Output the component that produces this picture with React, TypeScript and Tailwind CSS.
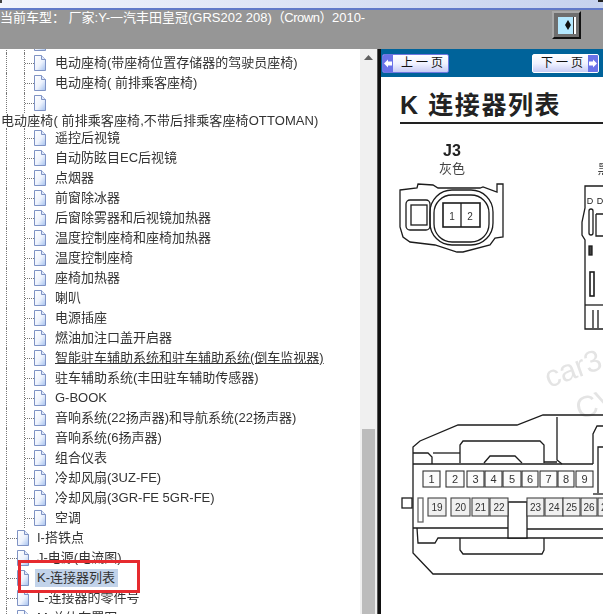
import React from "react";

const nestedItems = [
  "遥控后视镜",
  "自动防眩目EC后视镜",
  "点烟器",
  "前窗除冰器",
  "后窗除雾器和后视镜加热器",
  "温度控制座椅和座椅加热器",
  "温度控制座椅",
  "座椅加热器",
  "喇叭",
  "电源插座",
  "燃油加注口盖开启器",
  "智能驻车辅助系统和驻车辅助系统(倒车监视器)",
  "驻车辅助系统(丰田驻车辅助传感器)",
  "G-BOOK",
  "音响系统(22扬声器)和导航系统(22扬声器)",
  "音响系统(6扬声器)",
  "组合仪表",
  "冷却风扇(3UZ-FE)",
  "冷却风扇(3GR-FE 5GR-FE)",
  "空调",
];

const topItems = ["I-搭铁点", "J-电源(电流图)", "K-连接器列表", "L-连接器的零件号", "M-总体布置图"];

const row1 = [
  [423, 440],
  [446, 464],
  [467, 484],
  [485, 502],
  [503, 521],
  [522, 538],
  [540, 557],
  [558, 574],
  [576, 593],
];

const row2: [number, number, number][] = [
  [428, 446, 19],
  [451, 470, 20],
  [472, 489, 21],
  [490, 508, 22],
  [527, 544, 23],
  [545, 563, 24],
  [563, 580, 25],
  [581, 597, 26],
  [598, 615, 27],
];

const PageIcon = () => (
  <svg width="12" height="16" viewBox="0 0 12 16" className="shrink-0">
    <defs>
      <linearGradient id="pageFill" x1="0" y1="0" x2="1" y2="1">
        <stop offset="0" stopColor="#ffffff" />
        <stop offset="0.55" stopColor="#eef3fd" />
        <stop offset="1" stopColor="#a3c0ee" />
      </linearGradient>
    </defs>
    <path d="M0.5 0.5H7.5L11.5 4.5V15.5H0.5Z" fill="url(#pageFill)" stroke="#7f93c4" />
    <path d="M7.5 0.5V4.5H11.5" fill="#dfe8fa" stroke="#7f93c4" />
  </svg>
);

const NestedRow = ({ label, underline }: { label: string; underline?: boolean }) => (
  <div className="flex h-5 items-center">
    <span className="ml-[6px] h-full border-l border-dotted border-[#777]" />
    <span className="ml-[17px] h-full border-l border-dotted border-[#777]" />
    <span className="w-[9px] border-t border-dotted border-[#777]" />
    <PageIcon />
    <span className={"ml-[9px] whitespace-nowrap" + (underline ? " underline" : "")}>{label}</span>
  </div>
);

const TopRow = ({ label, selected }: { label: string; selected?: boolean }) => (
  <div className="flex h-5 items-center">
    <span className="ml-[6px] h-full border-l border-dotted border-[#777]" />
    <span className="w-[10px] border-t border-dotted border-[#777]" />
    <PageIcon />
    <span className={"ml-[6px] whitespace-nowrap pl-[2px] pr-[3px] leading-[18px]" + (selected ? " bg-[#c2d3ea]" : "")}>{label}</span>
  </div>
);

const NavButton = ({ label, dir }: { label: string; dir: "left" | "right" }) => (
  <div
    className={
      "flex h-[19px] w-[67px] items-stretch overflow-hidden rounded-[2px] border bg-gradient-to-b from-[#ffffff] via-[#f0f2ff] to-[#c8ccf4] " +
      (dir === "left" ? "border-[#6f78e0]" : "border-[#ffffff]")
    }
  >
    {dir === "left" && (
      <span className="flex w-[10px] items-center justify-center bg-[#6a72e8]">
        <svg width="8" height="9" viewBox="0 0 8 9">
          <path d="M0 4.5L4 0.5V2.5H8V6.5H4V8.5Z" fill="#ffffff" />
        </svg>
      </span>
    )}
    <span className="flex-1 whitespace-nowrap pl-[6px] text-center text-[12px] leading-[17px] tracking-[3px] text-[#111]">{label}</span>
    {dir === "right" && (
      <span className="flex w-[10px] items-center justify-center bg-[#6a72e8]">
        <svg width="8" height="9" viewBox="0 0 8 9">
          <path d="M8 4.5L4 0.5V2.5H0V6.5H4V8.5Z" fill="#ffffff" />
        </svg>
      </span>
    )}
  </div>
);

const ConnectorSheet = () => (
  <svg width="222" height="490" viewBox="381 124 222 490" className="block blur-[0.3px]">
    <g fontFamily='"Liberation Sans", Arial, sans-serif' fill="#222" textAnchor="middle">
      <text x="452" y="156" fontSize="16" fontWeight="700">J3</text>
      <text x="452" y="173" fontSize="13" fontFamily='"Noto Sans CJK SC", sans-serif' fill="#444">灰色</text>
      <text x="604" y="173" fontSize="13" fontFamily='"Noto Sans CJK SC", sans-serif' fill="#444">黑</text>
    </g>

    {/* J3 connector */}
    <g fill="none" stroke="#1c1c1c" strokeWidth="1.3">
      <path d="M400 190L417 188L418 184L433 185L438 188H480L483 187L497 192V184H503V237L495 238L490 245L463 252H457L435 245L410 242L403 237L400 227Z" />
      <rect x="430" y="190" width="63" height="55" rx="22" />
      <rect x="434" y="195" width="55" height="47" rx="18" />
      <rect x="443" y="203" width="37" height="24" strokeWidth="1.6" />
      <path d="M461 203V227" />
      <rect x="406" y="200" width="24" height="30" rx="4" />
      <rect x="411" y="205" width="16" height="20" />
      <text x="452" y="220" fontSize="10" fontFamily='"Liberation Sans", sans-serif' fill="#333" stroke="none" textAnchor="middle">1</text>
      <text x="470" y="220" fontSize="10" fontFamily='"Liberation Sans", sans-serif' fill="#333" stroke="none" textAnchor="middle">2</text>
    </g>

    {/* right connector, cut off by the page edge */}
    <g fill="none" stroke="#1c1c1c" strokeWidth="1.3">
      <path d="M604 186H585V208L582 222V235L585 240V329H604" />
      <path d="M585 305H604" />
      <path d="M596 214H604M596 214V236H604" />
      <rect x="589" y="209" width="4" height="26" rx="2" />
      <rect x="590" y="272" width="4" height="24" strokeWidth="1.6" />
      <rect x="589" y="246" width="3" height="9" fill="#444" />
      <path d="M593 310V328M598 310V328" />
      <text x="590" y="204" fontSize="9" fontFamily='"Liberation Sans", sans-serif' fill="#222" stroke="none" textAnchor="middle">D</text>
      <text x="600" y="204" fontSize="9" fontFamily='"Liberation Sans", sans-serif' fill="#222" stroke="none" textAnchor="middle">D</text>
    </g>

    {/* watermark */}
    <g fontFamily='"Liberation Sans", sans-serif' fontSize="30" fill="#e4e4e4">
      <text x="549" y="388" transform="rotate(-20 549 388)">car3</text>
      <text x="580" y="420" transform="rotate(-20 580 420)">CV</text>
    </g>

    {/* main connector */}
    <g fill="none" stroke="#1c1c1c" strokeWidth="1.3">
      <path d="M604 415H543L517 425H458L420 441L413 447V553L433 574H604" />
      <path d="M413 464H593" />
      <path d="M460 463V445L463 441H540L544 445V463" />
      <path d="M484 463L490 456H515L522 463" />
      <path d="M413 453H428L432 457V464" />
      <path d="M433 453H460" />
      <path d="M544 462H557M557 417V460L562 464" />
      <path d="M593 464V434L597 426H604" />
      <path d="M598 493V447H604" />
      <path d="M593 494H604" />
      <path d="M413 528H508M527 529H604" />
      <path d="M417 528L418 543H435L438 538H604" />
      <path d="M460 538V550L463 554H542L544 550V538" />
      <path d="M508 502H527V538H508Z" fill="#ffffff" />
      <rect x="402" y="498" width="10" height="10" />
      <rect x="418" y="498" width="5" height="24" stroke="#666" />
    </g>
    <g fontFamily='"Liberation Sans", sans-serif' fontSize="11" fill="#333" textAnchor="middle">
      {row1.map(([a, b], i) => (
        <g key={a}>
          <rect x={a} y="471" width={b - a} height="16" fill="#fbfbfb" stroke="#333" strokeWidth="1.1" />
          <text x={(a + b) / 2} y="483">{i + 1}</text>
        </g>
      ))}
      {row2.map(([a, b, n]) => (
        <g key={n}>
          <rect x={a} y="498" width={b - a} height="18" fill="#f0f0f0" stroke="#444" strokeWidth="1.1" />
          <text x={(a + b) / 2} y="511" fontSize="10">{n}</text>
        </g>
      ))}
    </g>
  </svg>
);

export default function App() {
  return (
    <div className="relative flex h-[614px] w-[603px] flex-col overflow-hidden bg-white font-['Liberation_Sans','Noto_Sans_CJK_SC',sans-serif] text-[13px] text-[#333]">
      {/* window title strip */}
      <div className="flex h-[8px] justify-between bg-gradient-to-r from-[#f2f4fc] to-[#c6d2ee]">
        <span className="h-[3px] w-[2px] bg-[#444]" />
        <span className="h-[2px] w-[5px] bg-[#222]" />
      </div>
      <div className="h-[2px] bg-[#6179c8]" />

      {/* model header */}
      <div className="flex h-[39px] items-start justify-between bg-[#969696] text-white">
        <span className="whitespace-nowrap leading-[15px]">
          当前车型： 厂家:Y-一汽丰田皇冠(GRS202 208)<span className="tracking-[-0.5px]">（Crown）</span>2010-
        </span>
        <div className="mr-[22px] mt-[1px] flex h-[28px] w-[29px] items-center justify-center border-2 border-b-[#111] border-l-[#a8a8a8] border-r-[#111] border-t-[#a8a8a8] bg-[#6e6e6e]">
          <div className="flex h-[17px] w-[18px] items-center justify-end bg-[#b4e8ff]">
            <svg width="6" height="10" viewBox="0 0 6 10" className="mr-[1px]">
              <path d="M3 0L6 5L3 10L0 5Z" fill="#111" />
            </svg>
            <span className="ml-[1px] h-full w-[3px] border-l border-l-[#333] bg-white" />
          </div>
        </div>
      </div>

      <div className="flex min-h-0 flex-1">
        {/* contents tree */}
        <div className="flex w-[360px] flex-col overflow-hidden blur-[0.25px]">
          <div className="-mt-[16px]">
            <NestedRow label="" />
            <NestedRow label="电动座椅(带座椅位置存储器的驾驶员座椅)" />
            <NestedRow label="电动座椅( 前排乘客座椅)" />
            <NestedRow label="" />
            <div className="flex h-[15px] items-center whitespace-nowrap pl-[1px] pt-[1px] tracking-[0.1px]">电动座椅( 前排乘客座椅,不带后排乘客座椅OTTOMAN)</div>
            {nestedItems.map((label, i) => (
              <NestedRow key={label} label={label} underline={i === 11} />
            ))}
            {topItems.map((label, i) => (
              <TopRow key={label} label={label} selected={i === 2} />
            ))}
          </div>
        </div>

        {/* tree scrollbar */}
        <div className="flex w-[17px] flex-col items-center bg-[#f0f0f0]">
          <div className="flex h-[17px] w-full items-center justify-center">
            <svg width="9" height="5" viewBox="0 0 9 5">
              <path d="M4.5 0L9 5H0Z" fill="#606060" />
            </svg>
          </div>
          <div className="mt-[363px] h-[185px] w-[13px] bg-[#bcbcbc]" />
        </div>

        <div className="w-[4px] border-l border-[#555] bg-[#111]" />

        {/* page viewer */}
        <div className="flex min-w-0 flex-1 flex-col">
          <div className="flex h-[28px] items-start justify-between bg-[#00639a] pl-[1px] pr-[4px] pt-[5px]">
            <NavButton label="上一页" dir="left" />
            <NavButton label="下一页" dir="right" />
          </div>
          <div className="min-h-0 flex-1 overflow-hidden">
            <div className="ml-[19px] mt-[12px] h-[35px] border-b-2 border-[#222]">
              <h1 className="whitespace-nowrap text-[25px] font-bold leading-[32px] tracking-[1.6px] text-[#222]">K 连接器列表</h1>
            </div>
            <ConnectorSheet />
          </div>
        </div>
      </div>

      {/* red annotation box */}
      <div className="absolute left-[18px] top-[560px] h-[33px] w-[122px] border-[3px] border-[#e62a2f]" />
    </div>
  );
}
